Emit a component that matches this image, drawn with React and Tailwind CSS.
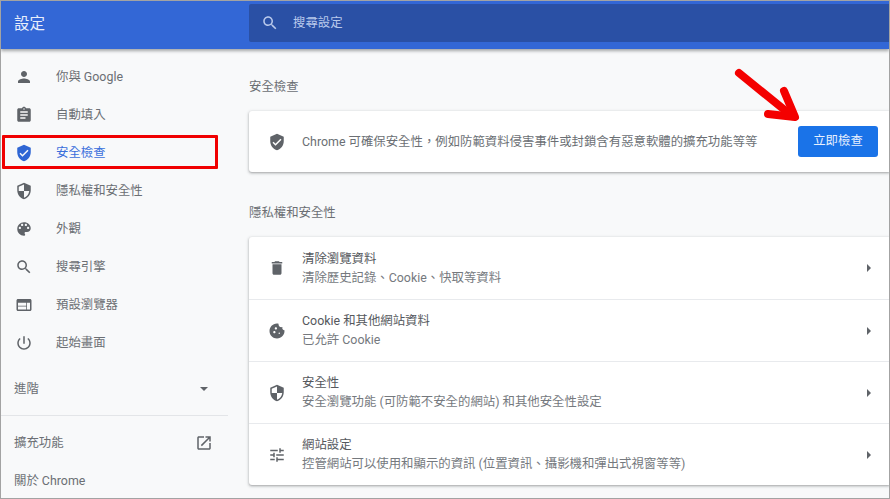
const P = {
  person: "M12 12c2.21 0 4-1.79 4-4s-1.79-4-4-4-4 1.79-4 4 1.79 4 4 4zm0 2c-2.67 0-8 1.34-8 4v2h16v-2c0-2.66-5.33-4-8-4z",
  assignment: "M19 3h-4.18C14.4 1.84 13.3 1 12 1c-1.3 0-2.4.84-2.82 2H5c-1.1 0-2 .9-2 2v14c0 1.1.9 2 2 2h14c1.1 0 2-.9 2-2V5c0-1.1-.9-2-2-2zm-7 0c.55 0 1 .45 1 1s-.45 1-1 1-1-.45-1-1 .45-1 1-1zm2 14H7v-2h7v2zm3-4H7v-2h10v2zm0-4H7V7h10v2z",
  verified: "M12 1L3 5v6c0 5.55 3.84 10.74 9 12 5.16-1.26 9-6.45 9-12V5l-9-4zm-2 16l-4-4 1.41-1.41L10 14.17l6.59-6.59L18 9l-8 8z",
  security: "M12 1L3 5v6c0 5.55 3.84 10.74 9 12 5.16-1.26 9-6.45 9-12V5l-9-4zm0 10.99h7c-.53 4.12-3.28 7.79-7 8.94V12H5V6.3l7-3.11v8.8z",
  palette: "M12 3c-4.97 0-9 4.03-9 9s4.03 9 9 9c.83 0 1.5-.67 1.5-1.5 0-.39-.15-.74-.39-1.01-.23-.26-.38-.61-.38-.99 0-.83.67-1.5 1.5-1.5H16c2.76 0 5-2.24 5-5 0-4.42-4.03-8-9-8zm-5.5 9c-.83 0-1.5-.67-1.5-1.5S5.67 9 6.5 9 8 9.67 8 10.5 7.33 12 6.5 12zm3-4C8.67 8 8 7.33 8 6.5S8.67 5 9.5 5s1.5.67 1.5 1.5S10.33 8 9.5 8zm5 0c-.83 0-1.5-.67-1.5-1.5S13.67 5 14.5 5s1.5.67 1.5 1.5S15.33 8 14.5 8zm3 4c-.83 0-1.5-.67-1.5-1.5S16.67 9 17.5 9s1.5.67 1.5 1.5-.67 1.5-1.5 1.5z",
  search: "M15.5 14h-.79l-.28-.27C15.41 12.59 16 11.11 16 9.5 16 5.91 13.09 3 9.5 3S3 5.91 3 9.5 5.91 16 9.5 16c1.61 0 3.09-.59 4.23-1.57l.27.28v.79l5 4.99L20.49 19l-4.99-5zm-6 0C7.01 14 5 11.99 5 9.5S7.01 5 9.5 5 14 7.01 14 9.5 11.99 14 9.5 14z",
  web: "M20 4H4c-1.1 0-1.99.9-1.99 2L2 18c0 1.1.9 2 2 2h16c1.1 0 2-.9 2-2V6c0-1.1-.9-2-2-2zm-5 14H4v-4h11v4zm0-5H4V9h16v0h-5v4zm5 5h-4v-9h4v9z",
  power: "M13 3h-2v10h2V3zm4.83 2.17l-1.42 1.42C17.99 7.86 19 9.81 19 12c0 3.87-3.13 7-7 7s-7-3.13-7-7c0-2.19 1.01-4.14 2.58-5.42L6.17 5.17C4.23 6.82 3 9.26 3 12c0 4.97 4.03 9 9 9s9-4.03 9-9c0-2.74-1.23-5.18-3.17-6.83z",
  open: "M19 19H5V5h7V3H5c-1.11 0-2 .9-2 2v14c0 1.1.89 2 2 2h14c1.1 0 2-.9 2-2v-7h-2v7zM14 3v2h3.59l-9.83 9.83 1.41 1.41L19 6.41V10h2V3h-7z",
  del: "M6 19c0 1.1.9 2 2 2h8c1.1 0 2-.9 2-2V7H6v12zM19 4h-3.5l-1-1h-5l-1 1H5v2h14V4z",
  cookie: "M21.95 10.99c-1.79-.03-3.7-1.95-2.68-4.22-2.97 1-5.78-1.59-5.19-4.56C7.11.74 2 6.41 2 12c0 5.52 4.48 10 10 10 5.89 0 10.54-5.08 9.95-11.01zM8.5 15c-.83 0-1.5-.67-1.5-1.5S7.67 12 8.5 12s1.5.67 1.5 1.5S9.33 15 8.5 15zm2-5C9.67 10 9 9.33 9 8.5S9.67 7 10.5 7s1.5.67 1.5 1.5-.67 1.5-1.5 1.5zm4.5 6c-.55 0-1-.45-1-1s.45-1 1-1 1 .45 1 1-.45 1-1 1z",
  tune: "M3 17v2h6v-2H3zM3 5v2h10V5H3zm10 16v-2h8v-2h-8v-2h-2v6h2zM7 9v2H3v2h4v2h2V9H7zm14 4v-2H11v2h10zm-6-4h2V7h4V5h-4V3h-2v6z",
};

function Icon({ d, className }) {
  return (
    <svg viewBox="0 0 24 24" className={className} fill="currentColor">
      <path d={d} />
    </svg>
  );
}

const nav = [
  ["person", "你與 Google"],
  ["assignment", "自動填入"],
  ["verified", "安全檢查", true],
  ["security", "隱私權和安全性"],
  ["palette", "外觀"],
  ["search", "搜尋引擎"],
  ["web", "預設瀏覽器"],
  ["power", "起始畫面"],
];

const rows = [
  ["del", "清除瀏覽資料", "清除歷史記錄、Cookie、快取等資料"],
  ["cookie", "Cookie 和其他網站資料", "已允許 Cookie"],
  ["security", "安全性", "安全瀏覽功能 (可防範不安全的網站) 和其他安全性設定"],
  ["tune", "網站設定", "控管網站可以使用和顯示的資訊 (位置資訊、攝影機和彈出式視窗等等)"],
];

export default function App() {
  return (
    <div className="relative w-[890px] h-[499px] overflow-hidden bg-[#f8f9fa] border border-[#a3a3a3] font-['Roboto','Noto_Sans_CJK_TC',sans-serif] text-[12.4px] text-[#6b6f74]">
      <header className="relative z-10 h-[48px] bg-[#3367d6] flex shadow-[0_2px_3px_rgba(60,64,67,0.45)]">
        <div className="w-[248px] pl-[13px] pt-[11px] text-[15.5px] leading-[24px] text-[#e8eefb]">設定</div>
        <div className="flex-1 mt-[3px] h-[38px] bg-[#2a50a5] rounded-l-[2px] flex items-center pl-[12px] text-[#b9c9ec]">
          <Icon d={P.search} className="w-[18px] h-[18px]" />
          <span className="ml-[14px] pt-[1px]">搜尋設定</span>
        </div>
      </header>

      <div className="flex">
        <aside className="w-[227px] shrink-0">
          <nav className="pt-[9px]">
            {nav.map(([icon, label, active]) => (
              <div key={label} className={`h-[38px] flex items-center pl-[14px] ${active ? "text-[#3a6fdc]" : ""}`}>
                <Icon d={P[icon]} className={`w-[18px] h-[18px] ${active ? "text-[#2f66d4]" : "text-[#5f6368]"}`} />
                <span className="ml-[23px]">{label}</span>
              </div>
            ))}
          </nav>
          <div className="h-[38px] mt-[8px] pl-[13px] pr-[20px] flex items-center justify-between">
            <span>進階</span>
            <span className="w-0 h-0 border-x-[4px] border-x-transparent border-t-[4px] border-t-[#5f6368]" />
          </div>
          <div className="mt-[7px] border-t border-[#e3e5e8]" />
          <div className="h-[38px] mt-[8px] pl-[13px] pr-[15px] flex items-center justify-between">
            <span>擴充功能</span>
            <Icon d={P.open} className="w-[18px] h-[18px] text-[#5f6368]" />
          </div>
          <div className="h-[38px] pl-[13px] flex items-center">關於 Chrome</div>
        </aside>

        <main className="flex-1 pl-[21px]">
          <h2 className="h-[24px] mt-[26px] leading-[24px] font-normal">安全檢查</h2>
          <section className="mt-[12px] h-[61px] bg-white rounded-l-[3px] shadow-[0_1px_2px_rgba(60,64,67,0.3),0_1px_3px_1px_rgba(60,64,67,0.15)] flex items-center pl-[19px]">
            <Icon d={P.verified} className="w-[18px] h-[18px] text-[#5f6368]" />
            <span className="ml-[16px] w-[496px] whitespace-nowrap pt-[1px]">Chrome 可確保安全性，例如防範資料侵害事件或封鎖含有惡意軟體的擴充功能等等</span>
            <button className="ml-0 w-[80px] h-[31px] rounded-[3px] bg-[#1a73e8] text-[#e8f0fe] text-[12.4px]">立即檢查</button>
          </section>
          <h2 className="h-[24px] mt-[29px] leading-[24px] font-normal">隱私權和安全性</h2>
          <section className="mt-[12px] bg-white rounded-l-[3px] shadow-[0_1px_2px_rgba(60,64,67,0.3),0_1px_3px_1px_rgba(60,64,67,0.15)]">
            {rows.map(([icon, title, sub], i) => (
              <div key={title} className={`h-[62px] flex items-center pl-[19px] pr-[18px] ${i ? "border-t border-[#e8eaed]" : ""}`}>
                <Icon d={P[icon]} className="w-[18px] h-[18px] text-[#5f6368]" />
                <div className={`ml-[16px] flex-1 leading-[19px] ${i ? "pb-[2px]" : ""}`}>
                  <div className="text-[#55585d]">{title}</div>
                  <div className="text-[#75797e]">{sub}</div>
                </div>
                <span className="w-0 h-0 border-y-[4px] border-y-transparent border-l-[4px] border-l-[#5f6368]" />
              </div>
            ))}
          </section>
        </main>
      </div>

      <div className="absolute left-[1px] top-[134px] w-[216px] h-[34px] border-[3px] border-[#f00000] rounded-[1px]" />
      <svg className="absolute left-[725px] top-[60px] w-[80px] h-[70px]" viewBox="0 0 80 70" fill="none" stroke="#f40000" strokeWidth="8" strokeLinecap="round" strokeLinejoin="round">
        <path d="M13 12L66 55" />
        <path d="M58 30L69 56L42 53" />
      </svg>
    </div>
  );
}
